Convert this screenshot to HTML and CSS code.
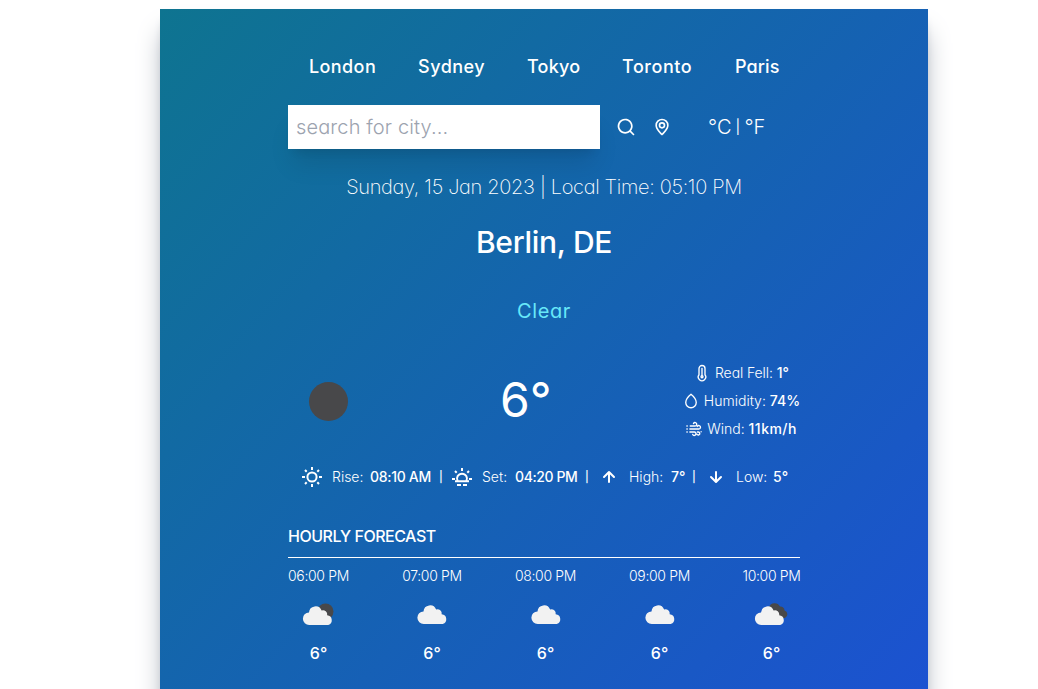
FILE: index.html
```html
<!DOCTYPE html>
<html lang="en">
<head>
<meta charset="utf-8">
<title>Weather</title>
<link rel="stylesheet" href="styles.css">
</head>
<body>
<svg class="defs" width="0" height="0">
  <symbol id="cloud" viewBox="0 0 30 20"><path d="M6.500 19.500a6 6 0 0 1-.3-12A6.200 6.200 0 0 1 18.200 5.800 4 4 0 0 1 23.500 10.300 4.700 4.700 0 0 1 24.500 19.500z" fill="#f2f2f2"/></symbol>
</svg>
<main class="card">
  <nav class="cities">
    <button class="w67 lon">London</button><button class="w67 syd">Sydney</button><button class="w53 tok">Tokyo</button><button class="w70 tor">Toronto</button><button class="w44 par">Paris</button>
  </nav>
  <section class="search">
    <input class="field" type="text" placeholder="search for city...">
    <svg class="ic20" viewBox="0 0 24 24"><path d="M21.710 20.290 18 16.610A9 9 0 1 0 16.610 18l3.680 3.680a1 1 0 0 0 1.420 0 1 1 0 0 0 0-1.390ZM11 18a7 7 0 1 1 7-7 7 7 0 0 1-7 7Z"/></svg>
    <svg class="ic20" viewBox="0 0 24 24"><path d="M12 2A8 8 0 0 0 4 9.920c0 5.480 7.050 11.580 7.350 11.840a1 1 0 0 0 1.300 0C13 21.500 20 15.400 20 9.920A8 8 0 0 0 12 2Zm0 17.650c-1.670-1.590-6-6-6-9.730a6 6 0 0 1 12 0C18 13.700 13.670 18.060 12 19.650ZM12 6a4 4 0 1 0 4 4 4 4 0 0 0-4-4Zm0 6a2 2 0 1 1 2-2 2 2 0 0 1-2 2Z"/></svg>
    <div class="units"><span>°C</span><span class="bar">|</span><span>°F</span></div>
  </section>
  <p class="date">Sunday, 15 Jan 2023 | Local Time: 05:10 PM</p>
  <h1 class="city">Berlin, DE</h1>
  <p class="condition">Clear</p>
  <section class="now">
    <svg class="moon" viewBox="0 0 80 80"><circle cx="40.500" cy="40.500" r="19.500" fill="#48484a"/></svg>
    <p class="temp">6°</p>
    <div class="details">
      <div class="detail">
        <svg class="ic18" viewBox="0 0 24 24"><g class="ln"><path d="M8 14.300V6a4 4 0 0 1 8 0v8.300a5 5 0 1 1-8 0Z"/><circle cx="12" cy="17" r="1.300"/><path d="M12 6v9"/></g></svg>
        <span class="fell">Real Fell:</span><b>1°</b></div>
      <div class="detail">
        <svg class="ic18" viewBox="0 0 24 24"><path class="ln" d="M12 3C9.500 5 5 9.500 5 14a7 7 0 0 0 14 0c0-4.500-4.500-9-7-11Z"/></svg>
        <span class="hum">Humidity:</span><b class="humv">74%</b></div>
      <div class="detail">
        <svg class="ic18" viewBox="0 0 24 24"><path class="ln" d="M7 8h6.500a2.300 2.300 0 1 0-2.200-3.300M2.500 8H3M2.500 12H3M6.500 12h12a2.300 2.300 0 1 0-2.200-3.300M21.500 15.500v.1M2.500 16H3M6.500 16h6a2.300 2.300 0 1 1-2.200 3.300M16.500 16h1a2 2 0 1 1-1.500 3"/></svg>
        <span class="wind">Wind:</span><b class="windv">11km/h</b></div>
    </div>
  </section>
  <section class="stats">
    <svg class="ic24" viewBox="0 0 24 24"><g class="ln flat"><circle cx="12" cy="12" r="4.600"/><path d="M12 2v3M12 19v3M2 12h3M19 12h3M5 5l1.700 1.700M17.300 17.300 19 19M5 19l1.700-1.700M17.300 6.700 19 5"/></g></svg>
    <span class="lab rise">Rise:</span><b class="v1">08:10 AM</b><i>|</i>
    <svg class="ic24" viewBox="0 0 24 24"><g class="ln flat"><path d="M5 16.200h14M7.600 16a5 5 0 1 1 8.800 0M12 3v3M2 14h3M19 14h3M5 6l1.700 1.700M17.300 7.700 19 6M7 20h4M13 20h4" /></g></svg>
    <span class="lab set">Set:</span><b class="v2">04:20 PM</b><i class="wide">|</i>
    <svg class="ic24" viewBox="0 0 24 24"><path d="M17.710 11.290l-5-5a1 1 0 0 0-1.420 0l-5 5a1 1 0 0 0 1.420 1.420L11 9.410V17a1 1 0 0 0 2 0V9.410l3.290 3.300a1 1 0 0 0 1.420-1.420Z"/></svg>
    <span class="lab high">High:</span><b class="v3">7°</b><i class="wide">|</i>
    <svg class="ic24" viewBox="0 0 24 24"><path d="M17.710 12.710l-5 5a1 1 0 0 1-1.420 0l-5-5a1 1 0 0 1 1.420-1.420L11 14.590V7a1 1 0 0 1 2 0v7.590l3.290-3.300a1 1 0 0 1 1.420 1.420Z"/></svg>
    <span class="lab low">Low:</span><b class="v4">5°</b>
  </section>
  <h2 class="heading">HOURLY FORECAST</h2>
  <section class="hours">
    <div class="hour w61"><span>06:00 PM</span><svg viewBox="0 0 50 50"><circle cx="31.500" cy="21.500" r="8" fill="#48484a"/><use href="#cloud" x="8.500" y="14.500" width="31.500" height="21"/></svg><b>6°</b></div>
    <div class="hour w60"><span>07:00 PM</span><svg viewBox="0 0 50 50"><use href="#cloud" x="10" y="13.500" width="31.500" height="21"/></svg><b>6°</b></div>
    <div class="hour w61"><span>08:00 PM</span><svg viewBox="0 0 50 50"><use href="#cloud" x="10" y="13.500" width="31.500" height="21"/></svg><b>6°</b></div>
    <div class="hour w61"><span>09:00 PM</span><svg viewBox="0 0 50 50"><use href="#cloud" x="10" y="13.500" width="31.500" height="21"/></svg><b>6°</b></div>
    <div class="hour w57"><span>10:00 PM</span><svg viewBox="0 0 50 50"><path d="M22 17a6 6 0 0 1 11-.5 4 4 0 0 1 4.500 4A4 4 0 0 1 38 28H30Z" fill="#48484a"/><use href="#cloud" x="7.500" y="14.500" width="31.500" height="21"/></svg><b>6°</b></div>
  </section>
</main>
</body>
</html>
```
FILE: styles.css
```css
* { box-sizing: border-box; }
html, body { height: 689px; overflow: hidden; }
body { margin: 0; padding-top: 9px; background: #fff; color: #fff; font-family: Inter, "Open Sans", sans-serif; font-feature-settings: "cv11"; }
p, h1, h2 { margin: 0; }
svg { display: block; flex: none; fill: currentColor; }
.defs { position: absolute; }
.card { width: 768px; height: 850px; margin: 0 0 0 160px; padding: 44px 128px 0; background: linear-gradient(to bottom right, #0e7490, #1d4ed8); box-shadow: 0 20px 25px -5px #9ca3af, 0 8px 10px -6px #9ca3af; }
.cities { display: flex; gap: 42px; height: 28px; padding-left: 21px; }
.cities button { flex: none; padding: 0; border: 0; background: none; color: inherit; font: 500 18px/28px Inter, sans-serif; font-feature-settings: inherit; text-align: left; white-space: nowrap; }
.cities .lon { letter-spacing: .4px; } .cities .syd { letter-spacing: .5px; } .cities .tok { letter-spacing: .25px; } .cities .tor { letter-spacing: .55px; } .cities .par { letter-spacing: .1px; margin-left: 1px; }
.w67 { width: 67px; } .w53 { width: 53px; } .w70 { width: 70px; } .w44 { width: 44px; }
.w61 { width: 61px; } .w60 { width: 60px; } .w57 { width: 57px; }
.search { display: flex; align-items: center; gap: 16px; height: 44px; margin-top: 24px; }
.field { width: 312px; height: 44px; padding: 8px; border: 0; background: #fff; font: 300 20px/28px Inter, sans-serif; font-feature-settings: inherit; letter-spacing: .13px; box-shadow: 0 20px 25px -5px rgba(0,0,0,.1), 0 8px 10px -6px rgba(0,0,0,.1); }
.field::placeholder { color: #9ca3af; opacity: 1; }
.ic20 { width: 20px; height: 20px; }
.units { display: flex; gap: 4px; margin-left: 20px; font-size: 20px; font-weight: 300; line-height: 28px; }
.bar { width: 5px; font-size: 14px; font-weight: 400; text-align: center; }
.date { height: 28px; margin-top: 24px; font-size: 20px; font-weight: 250; letter-spacing: -.33px; line-height: 28px; text-align: center; white-space: nowrap; }
.city { height: 36px; margin-top: 23px; font-size: 30px; font-weight: 500; letter-spacing: -.3px; line-height: 36px; text-align: center; }
.condition { height: 28px; margin-top: 37px; color: #67e8f9; font-size: 20px; letter-spacing: .6px; line-height: 28px; text-align: center; }
.now { display: flex; align-items: center; justify-content: space-between; height: 84px; margin-top: 34px; }
.moon { width: 80px; height: 80px; }
.temp { width: 50px; font-size: 48px; line-height: 46px; height: 48px; white-space: nowrap; }
.details { display: flex; flex-direction: column; align-items: center; gap: 8px; width: 118px; }
.detail { display: flex; align-items: center; gap: 4px; height: 20px; font-size: 14px; font-weight: 300; line-height: 20px; white-space: nowrap; }
.ic18 { width: 18px; height: 18px; }
.fell { letter-spacing: -.1px; }
.windv { letter-spacing: .45px; }
b { font-weight: 500; }
.ln { fill: none; stroke: currentColor; stroke-width: 1.8; stroke-linecap: round; stroke-linejoin: round; }
.flat { stroke-width: 2; stroke-linecap: butt; }
.stats { display: flex; align-items: center; height: 24px; margin-top: 22px; padding-left: 12px; font-size: 14px; line-height: 20px; white-space: nowrap; }
.stats > * { flex: none; }
.stats i { width: 12px; padding-left: 1px; font-size: 11px; font-style: normal; font-weight: 500; }
.stats .wide { width: 13px; }
.ic24 { width: 24px; height: 24px; }
.lab { margin-left: 8px; font-weight: 300; }
.rise { width: 38px; } .set { width: 33px; } .high { width: 42px; } .low { width: 37px; }
.v1 { width: 68px; letter-spacing: -.3px; } .v2 { width: 69px; letter-spacing: -.4px; } .v3 { width: 20px; }
.heading { height: 34px; margin-top: 35px; border-bottom: 1px solid #fff; font-size: 16px; font-weight: 500; letter-spacing: -.5px; line-height: 24px; }
.hours { display: flex; justify-content: space-between; padding-top: 8px; }
.hour { display: flex; flex-direction: column; align-items: center; font-size: 14px; line-height: 20px; white-space: nowrap; }
.hour span { font-weight: 300; letter-spacing: -.35px; }
.hour svg { width: 50px; height: 50px; margin: 4px 0 1px; }
.hour b { font-size: 16px; line-height: 24px; }
```
